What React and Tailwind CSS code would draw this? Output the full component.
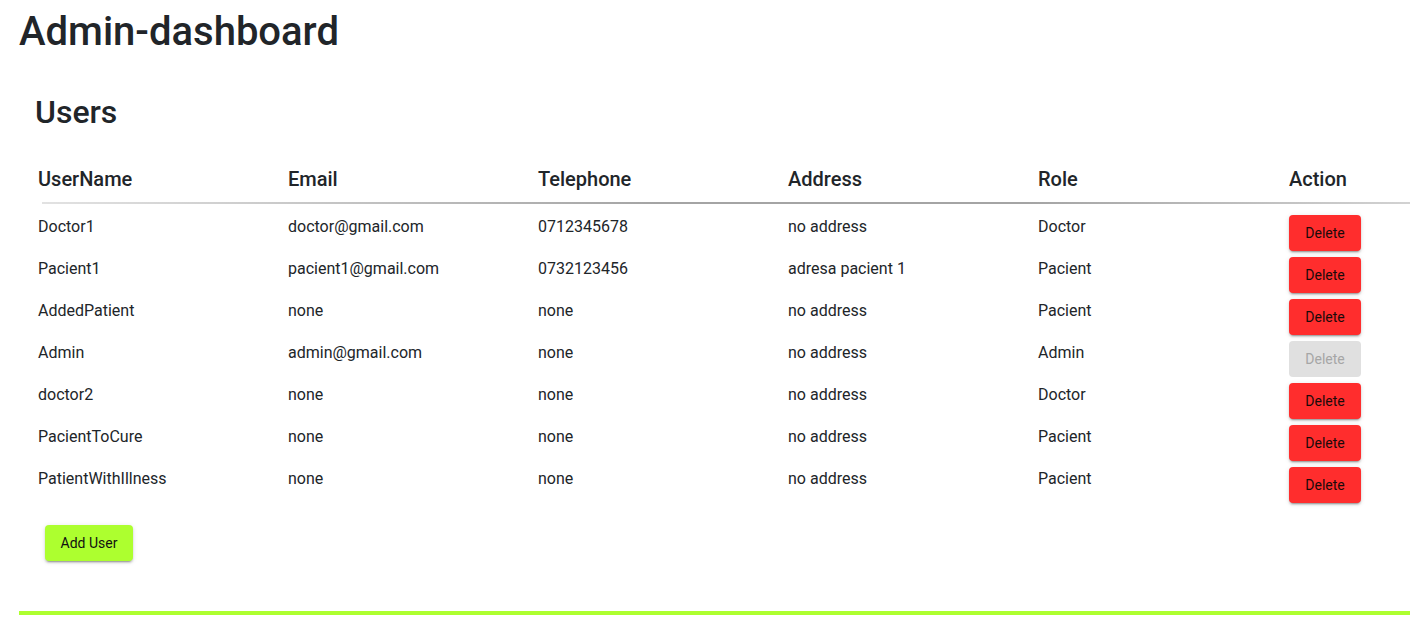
import React from "react";

const users = [
  { name: "Doctor1", email: "doctor@gmail.com", phone: "0712345678", address: "no address", role: "Doctor" },
  { name: "Pacient1", email: "pacient1@gmail.com", phone: "0732123456", address: "adresa pacient 1", role: "Pacient" },
  { name: "AddedPatient", email: "none", phone: "none", address: "no address", role: "Pacient" },
  { name: "Admin", email: "admin@gmail.com", phone: "none", address: "no address", role: "Admin", disabled: true },
  { name: "doctor2", email: "none", phone: "none", address: "no address", role: "Doctor" },
  { name: "PacientToCure", email: "none", phone: "none", address: "no address", role: "Pacient" },
  { name: "PatientWithIllness", email: "none", phone: "none", address: "no address", role: "Pacient" },
];

const headers = ["UserName", "Email", "Telephone", "Address", "Role", "Action"];

const raised =
  "shadow-[0_3px_1px_-2px_rgba(0,0,0,0.2),0_2px_2px_0_rgba(0,0,0,0.14),0_1px_5px_0_rgba(0,0,0,0.12)]";

export default function App() {
  return (
    <div className="w-[1410px] h-[625px] overflow-hidden bg-white text-[#212529] font-['Roboto','Liberation_Sans',sans-serif]">
      <h1 className="mt-2 ml-[19px] text-[40px] leading-[48px] font-medium">Admin-dashboard</h1>

      <h2 className="mt-[37px] ml-[35px] text-[32px] leading-[38px] font-medium">Users</h2>

      {/* Table header */}
      <div className="mt-[36px] ml-[38px] grid grid-cols-[repeat(6,250px)] text-[20px] leading-6 font-medium">
        {headers.map((h, i) => (
          <div key={h} className={i === 5 ? "pl-px" : ""}>{h}</div>
        ))}
      </div>
      <div className="mt-[11px] ml-[42px] h-[2px] bg-[linear-gradient(to_right,#e2e2e2,#a4a4a4_45%,#a4a4a4_72%,#d2d2d2)]" />

      {/* Rows */}
      <div className="mt-[11px] ml-[38px]">
        {users.map((u) => (
          <div key={u.name} className="grid grid-cols-[repeat(6,250px)] h-[42px] text-base leading-6">
            <div>{u.name}</div>
            <div>{u.email}</div>
            <div>{u.phone}</div>
            <div>{u.address}</div>
            <div>{u.role}</div>
            <div>
              {u.disabled ? (
                <button
                  disabled
                  className="ml-px w-[72px] h-9 rounded text-sm bg-[#e0e0e0] text-[#a6a6a6]"
                >
                  Delete
                </button>
              ) : (
                <button
                  className={`ml-px w-[72px] h-9 rounded text-sm bg-[#ff2d2d] text-[#1a0a0a] ${raised}`}
                >
                  Delete
                </button>
              )}
            </div>
          </div>
        ))}
      </div>

      <button
        className={`mt-4 ml-[45px] w-[88px] h-9 rounded text-sm bg-[#adff2f] text-[#111] ${raised}`}
      >
        Add User
      </button>

      <div className="mt-[50px] ml-[19px] h-1 bg-[#adff2f]" />
    </div>
  );
}
